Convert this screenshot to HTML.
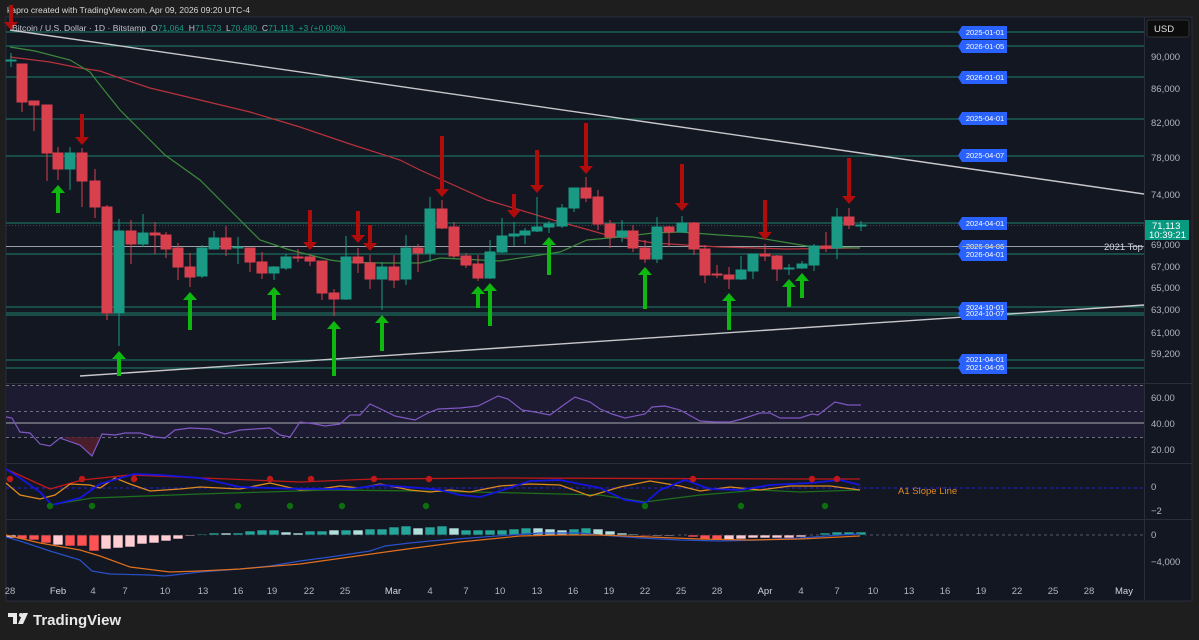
<!DOCTYPE html>
<html><head><meta charset="utf-8"><style>
html,body{margin:0;padding:0;background:#1e1e1e;width:1199px;height:640px;overflow:hidden}
svg{display:block}
text{font-family:"Liberation Sans",sans-serif}
</style></head><body>
<svg width="1199" height="640" viewBox="0 0 1199 640" xmlns="http://www.w3.org/2000/svg">
<rect width="1199" height="640" fill="#1e1e1e"/>
<text x="7" y="13" font-size="8.6" fill="#d8d8d8">kapro created with TradingView.com, Apr 09, 2026 09:20 UTC-4</text>
<rect x="6" y="17" width="1186" height="584" fill="#131722" stroke="#2a2e39"/>
<rect x="6" y="385" width="1138" height="52" fill="#1d1b31"/>
<g stroke="#2a2e39" stroke-width="1">
<line x1="6" y1="383.5" x2="1192" y2="383.5"/>
<line x1="6" y1="463.5" x2="1192" y2="463.5"/>
<line x1="6" y1="519.5" x2="1192" y2="519.5"/>
<line x1="1144.5" y1="17" x2="1144.5" y2="600"/>
</g>
<g stroke="#1d6b5c" stroke-width="1.3">
<line x1="6" y1="32" x2="1144" y2="32"/><line x1="6" y1="46" x2="1144" y2="46"/>
<line x1="6" y1="77" x2="1144" y2="77"/><line x1="6" y1="119" x2="1144" y2="119"/>
<line x1="6" y1="156" x2="1144" y2="156"/><line x1="6" y1="223" x2="1144" y2="223"/>
<line x1="6" y1="254" x2="1144" y2="254"/><line x1="6" y1="307" x2="1144" y2="307"/>
<line x1="6" y1="313" x2="1144" y2="313"/><line x1="6" y1="315" x2="1144" y2="315"/>
<line x1="6" y1="360" x2="1144" y2="360"/><line x1="6" y1="368" x2="1144" y2="368"/>
</g>
<line x1="6" y1="246.5" x2="1144" y2="246.5" stroke="#9aa0a8" stroke-width="1"/>
<line x1="6" y1="225.5" x2="1144" y2="225.5" stroke="#3a4a50" stroke-dasharray="1,2"/>
<line x1="10" y1="30" x2="1144" y2="194" stroke="#c8c8cc" stroke-width="1.4"/>
<line x1="80" y1="376" x2="1144" y2="305" stroke="#c8c8cc" stroke-width="1.4"/>
<polyline fill="none" stroke="#b8323c" stroke-width="1.2" points="10,57 50,62 80,68 100,71 120,78 150,88 200,100 250,112 300,127 350,144 400,160 420,170 487,200 553,220 607,235 653,243 720,247 787,249 860,248"/>
<polyline fill="none" stroke="#3c8a3c" stroke-width="1.2" points="10,47 35,51 70,60 90,72 100,85 120,110 140,130 165,155 200,180 230,210 260,240 290,250 310,255 330,260 345,262 380,263 400,263 420,263 440,258 500,261 560,252 587,240 620,237 653,233 680,232 720,235 753,237 813,247 860,248"/>
<g stroke-width="1">
<g fill="#d9404e" stroke="#d9404e">
<line x1="22" y1="64" x2="22" y2="112"/><rect x="17" y="64" width="10" height="38"/>
<line x1="34" y1="101" x2="34" y2="131"/><rect x="29" y="101" width="10" height="4"/>
<line x1="47" y1="105" x2="47" y2="181"/><rect x="42" y="105" width="10" height="48"/>
<line x1="58" y1="147" x2="58" y2="180"/><rect x="53" y="153" width="10" height="16"/>
<line x1="82" y1="148" x2="82" y2="207"/><rect x="77" y="153" width="10" height="28"/>
<line x1="95" y1="169" x2="95" y2="218"/><rect x="90" y="181" width="10" height="26"/>
<line x1="107" y1="205" x2="107" y2="320"/><rect x="102" y="207" width="10" height="106"/>
<line x1="131" y1="220" x2="131" y2="264"/><rect x="126" y="231" width="10" height="13"/>
<line x1="155" y1="222" x2="155" y2="254"/><rect x="150" y="233" width="10" height="2"/>
<line x1="166" y1="232" x2="166" y2="258"/><rect x="161" y="235" width="10" height="14"/>
<line x1="178" y1="243" x2="178" y2="280"/><rect x="173" y="248" width="10" height="19"/>
<line x1="190" y1="253" x2="190" y2="287"/><rect x="185" y="267" width="10" height="10"/>
<line x1="226" y1="226" x2="226" y2="256"/><rect x="221" y="238" width="10" height="11"/>
<line x1="250" y1="248" x2="250" y2="272"/><rect x="245" y="248" width="10" height="14"/>
<line x1="262" y1="252" x2="262" y2="279"/><rect x="257" y="262" width="10" height="11"/>
<line x1="298" y1="249" x2="298" y2="262"/><rect x="293" y="257" width="10" height="1"/>
<line x1="310" y1="254" x2="310" y2="266"/><rect x="305" y="257" width="10" height="4"/>
<line x1="322" y1="261" x2="322" y2="300"/><rect x="317" y="261" width="10" height="32"/>
<line x1="334" y1="289" x2="334" y2="316"/><rect x="329" y="293" width="10" height="6"/>
<line x1="358" y1="248" x2="358" y2="273"/><rect x="353" y="257" width="10" height="6"/>
<line x1="370" y1="255" x2="370" y2="289"/><rect x="365" y="263" width="10" height="16"/>
<line x1="394" y1="255" x2="394" y2="288"/><rect x="389" y="267" width="10" height="13"/>
<line x1="418" y1="244" x2="418" y2="272"/><rect x="413" y="248" width="10" height="5"/>
<line x1="442" y1="200" x2="442" y2="229"/><rect x="437" y="209" width="10" height="19"/>
<line x1="454" y1="222" x2="454" y2="258"/><rect x="449" y="227" width="10" height="29"/>
<line x1="466" y1="253" x2="466" y2="268"/><rect x="461" y="256" width="10" height="9"/>
<line x1="478" y1="255" x2="478" y2="281"/><rect x="473" y="264" width="10" height="14"/>
<line x1="586" y1="177" x2="586" y2="202"/><rect x="581" y="188" width="10" height="10"/>
<line x1="598" y1="190" x2="598" y2="230"/><rect x="593" y="197" width="10" height="27"/>
<line x1="610" y1="220" x2="610" y2="248"/><rect x="605" y="224" width="10" height="13"/>
<line x1="633" y1="225" x2="633" y2="252"/><rect x="628" y="231" width="10" height="17"/>
<line x1="645" y1="240" x2="645" y2="263"/><rect x="640" y="248" width="10" height="11"/>
<line x1="669" y1="226" x2="669" y2="247"/><rect x="664" y="227" width="10" height="5"/>
<line x1="694" y1="222" x2="694" y2="255"/><rect x="689" y="223" width="10" height="26"/>
<line x1="705" y1="245" x2="705" y2="283"/><rect x="700" y="249" width="10" height="26"/>
<line x1="717" y1="265" x2="717" y2="278"/><rect x="712" y="274" width="10" height="1"/>
<line x1="729" y1="267" x2="729" y2="289"/><rect x="724" y="275" width="10" height="4"/>
<line x1="765" y1="244" x2="765" y2="261"/><rect x="760" y="254" width="10" height="2"/>
<line x1="777" y1="255" x2="777" y2="281"/><rect x="772" y="256" width="10" height="13"/>
<line x1="826" y1="232" x2="826" y2="252"/><rect x="821" y="246" width="10" height="2"/>
<line x1="849" y1="208" x2="849" y2="229"/><rect x="844" y="217" width="10" height="8"/>
</g>
<g fill="#1a9a84" stroke="#1a9a84">
<line x1="11" y1="53" x2="11" y2="67"/><rect x="6" y="60" width="10" height="1"/>
<line x1="70" y1="147" x2="70" y2="190"/><rect x="65" y="153" width="10" height="16"/>
<line x1="119" y1="219" x2="119" y2="346"/><rect x="114" y="231" width="10" height="82"/>
<line x1="143" y1="214" x2="143" y2="247"/><rect x="138" y="233" width="10" height="11"/>
<line x1="202" y1="245" x2="202" y2="278"/><rect x="197" y="248" width="10" height="28"/>
<line x1="214" y1="231" x2="214" y2="249"/><rect x="209" y="238" width="10" height="11"/>
<line x1="238" y1="237" x2="238" y2="264"/><rect x="233" y="247" width="10" height="1"/>
<line x1="274" y1="266" x2="274" y2="280"/><rect x="269" y="267" width="10" height="6"/>
<line x1="286" y1="254" x2="286" y2="270"/><rect x="281" y="257" width="10" height="11"/>
<line x1="346" y1="236" x2="346" y2="300"/><rect x="341" y="257" width="10" height="42"/>
<line x1="382" y1="262" x2="382" y2="310"/><rect x="377" y="267" width="10" height="12"/>
<line x1="406" y1="235" x2="406" y2="285"/><rect x="401" y="248" width="10" height="31"/>
<line x1="430" y1="197" x2="430" y2="262"/><rect x="425" y="209" width="10" height="44"/>
<line x1="490" y1="240" x2="490" y2="279"/><rect x="485" y="252" width="10" height="26"/>
<line x1="502" y1="218" x2="502" y2="253"/><rect x="497" y="236" width="10" height="16"/>
<line x1="514" y1="222" x2="514" y2="246"/><rect x="509" y="234" width="10" height="2"/>
<line x1="525" y1="228" x2="525" y2="244"/><rect x="520" y="231" width="10" height="4"/>
<line x1="537" y1="197" x2="537" y2="232"/><rect x="532" y="227" width="10" height="4"/>
<line x1="549" y1="221" x2="549" y2="233"/><rect x="544" y="224" width="10" height="3"/>
<line x1="562" y1="204" x2="562" y2="228"/><rect x="557" y="208" width="10" height="18"/>
<line x1="574" y1="188" x2="574" y2="212"/><rect x="569" y="188" width="10" height="20"/>
<line x1="622" y1="220" x2="622" y2="242"/><rect x="617" y="231" width="10" height="6"/>
<line x1="657" y1="217" x2="657" y2="263"/><rect x="652" y="227" width="10" height="32"/>
<line x1="682" y1="216" x2="682" y2="233"/><rect x="677" y="223" width="10" height="9"/>
<line x1="741" y1="256" x2="741" y2="280"/><rect x="736" y="270" width="10" height="9"/>
<line x1="753" y1="254" x2="753" y2="279"/><rect x="748" y="254" width="10" height="17"/>
<line x1="789" y1="264" x2="789" y2="275"/><rect x="784" y="268" width="10" height="1"/>
<line x1="802" y1="261" x2="802" y2="269"/><rect x="797" y="264" width="10" height="4"/>
<line x1="814" y1="244" x2="814" y2="271"/><rect x="809" y="246" width="10" height="19"/>
<line x1="837" y1="208" x2="837" y2="259"/><rect x="832" y="217" width="10" height="31"/>
<line x1="861" y1="221" x2="861" y2="231"/><rect x="856" y="225" width="10" height="1"/>
</g>
</g>
<g fill="#b00c0c">
<path d="M9,5h4v17h5l-7,8l-7,-8h5z"/>
<path d="M80,114h4v23h5l-7,8l-7,-8h5z"/>
<path d="M308,210h4v32h5l-7,8l-7,-8h5z"/>
<path d="M356,211h4v24h5l-7,8l-7,-8h5z"/>
<path d="M368,225h4v18h5l-7,8l-7,-8h5z"/>
<path d="M440,136h4v53h5l-7,8l-7,-8h5z"/>
<path d="M512,194h4v16h5l-7,8l-7,-8h5z"/>
<path d="M535,150h4v35h5l-7,8l-7,-8h5z"/>
<path d="M584,123h4v43h5l-7,8l-7,-8h5z"/>
<path d="M680,164h4v39h5l-7,8l-7,-8h5z"/>
<path d="M763,200h4v32h5l-7,8l-7,-8h5z"/>
<path d="M847,158h4v38h5l-7,8l-7,-8h5z"/>
</g>
<g fill="#0fb80f">
<path d="M58,185l7,8h-5v20h-4v-20h-5z"/>
<path d="M119,351l7,8h-5v17h-4v-17h-5z"/>
<path d="M190,292l7,8h-5v30h-4v-30h-5z"/>
<path d="M274,287l7,8h-5v25h-4v-25h-5z"/>
<path d="M334,321l7,8h-5v47h-4v-47h-5z"/>
<path d="M382,315l7,8h-5v28h-4v-28h-5z"/>
<path d="M478,286l7,8h-5v14h-4v-14h-5z"/>
<path d="M490,283l7,8h-5v35h-4v-35h-5z"/>
<path d="M549,237l7,8h-5v30h-4v-30h-5z"/>
<path d="M645,267l7,8h-5v34h-4v-34h-5z"/>
<path d="M729,293l7,8h-5v29h-4v-29h-5z"/>
<path d="M789,279l7,8h-5v20h-4v-20h-5z"/>
<path d="M802,273l7,8h-5v17h-4v-17h-5z"/>
</g>
<text x="12" y="31" font-size="8.6" fill="#c0c3ca" xml:space="preserve">Bitcoin / U.S. Dollar · 1D · Bitstamp  O<tspan fill="#1a9a84">71,064</tspan>  H<tspan fill="#1a9a84">71,573</tspan>  L<tspan fill="#1a9a84">70,480</tspan>  C<tspan fill="#1a9a84">71,113  +3 (+0.00%)</tspan></text>
<g font-size="7.5" fill="#fff" text-anchor="middle">
<g fill="#2962ff">
<path d="M962,26h45v13h-45l-4,-6.5z"/><path d="M962,40h45v13h-45l-4,-6.5z"/>
<path d="M962,71h45v13h-45l-4,-6.5z"/><path d="M962,112h45v13h-45l-4,-6.5z"/>
<path d="M962,149h45v13h-45l-4,-6.5z"/><path d="M962,217h45v13h-45l-4,-6.5z"/>
<path d="M962,240h45v13h-45l-4,-6.5z"/><path d="M962,248h45v13h-45l-4,-6.5z"/>
<path d="M962,302h45v13h-45l-4,-6.5z"/><path d="M962,307h45v13h-45l-4,-6.5z"/>
<path d="M962,354h45v13h-45l-4,-6.5z"/><path d="M962,361h45v13h-45l-4,-6.5z"/>
</g>
<text x="985" y="35">2025-01-01</text><text x="985" y="49">2026-01-05</text>
<text x="985" y="80">2026-01-01</text><text x="985" y="121">2025-04-01</text>
<text x="985" y="158">2025-04-07</text><text x="985" y="226">2024-04-01</text>
<text x="985" y="257">2026-04-01</text><text x="985" y="249">2026-04-06</text>
<text x="985" y="310">2024-10-01</text><text x="985" y="316">2024-10-07</text>
<text x="985" y="362">2021-04-01</text><text x="985" y="370">2021-04-05</text>
</g>
<line x1="962" y1="246.5" x2="1007" y2="246.5" stroke="#9aa0a8"/>
<text x="1104" y="250" font-size="9.5" fill="#d1d4dc">2021 Top</text>
<rect x="1147" y="20" width="42" height="17" rx="2" fill="#0c0c0c" stroke="#333"/>
<text x="1154" y="32" font-size="9.5" fill="#e0e0e0">USD</text>
<g font-size="9.5" fill="#b2b5be">
<text x="1151" y="60">90,000</text><text x="1151" y="92">86,000</text>
<text x="1151" y="126">82,000</text><text x="1151" y="161">78,000</text>
<text x="1151" y="198">74,000</text><text x="1151" y="248">69,000</text>
<text x="1151" y="270">67,000</text><text x="1151" y="291">65,000</text>
<text x="1151" y="313">63,000</text><text x="1151" y="336">61,000</text>
<text x="1151" y="357">59,200</text>
<text x="1151" y="401">60.00</text><text x="1151" y="427">40.00</text><text x="1151" y="453">20.00</text>
<text x="1151" y="490">0</text><text x="1151" y="514">−2</text>
<text x="1151" y="538">0</text><text x="1151" y="565">−4,000</text>
</g>
<rect x="1145" y="220" width="44" height="20" fill="#089981"/>
<text x="1152" y="229" font-size="9.5" fill="#fff">71,113</text>
<text x="1149" y="238" font-size="9.5" fill="#fff">10:39:21</text>
<g stroke="#6f6f80" stroke-dasharray="3,3" stroke-width="1"><line x1="6" y1="385.5" x2="1144" y2="385.5"/><line x1="6" y1="411.5" x2="1144" y2="411.5"/><line x1="6" y1="437.5" x2="1144" y2="437.5"/></g>
<line x1="6" y1="423" x2="1144" y2="423" stroke="#8c8c98" stroke-width="1.2"/>
<path d="M62,437 L80,445 L92,456 L100,437z" fill="#5a2030" opacity="0.8"/>
<polyline fill="none" stroke="#7e57c2" stroke-width="1.2" points="6,417 12,418 20,432 30,433 40,444 50,446 60,438 80,445 92,456 102,434 115,435 125,433 140,433 155,437 165,438 175,430 190,428 210,429 225,434 240,430 255,429 270,428 280,435 290,437 300,422 315,424 325,426 340,424 350,415 360,415 370,404 385,411 395,416 415,420 428,413 438,409 460,408 478,406 498,396 508,399 522,410 535,412 550,415 565,404 575,397 590,402 600,409 612,414 625,418 645,414 652,407 665,406 680,410 700,421 715,422 730,422 742,419 760,413 770,413 780,418 800,418 812,414 818,415 835,402 848,405 861,405"/>
<line x1="6" y1="488" x2="1144" y2="488" stroke="#2222a8" stroke-width="1.3" stroke-dasharray="3,3"/>
<text x="898" y="494" font-size="9.5" fill="#e08a1e">A1 Slope Line</text>
<polyline fill="none" stroke="#c01818" stroke-width="1.3" points="6,469 50,489 82,480 130,475 300,482 374,479 500,478 800,479 860,479"/>
<polyline fill="none" stroke="#1e6e1e" stroke-width="1.3" points="50,505 92,498 200,494 330,490 420,491 520,493 600,495 645,502 700,495 760,490 800,492 860,490"/>
<polyline fill="none" stroke="#e08a1e" stroke-width="1.3" points="6,483 20,495 40,499 55,495 70,484 90,485 100,488 115,478 130,484 150,491 180,489 200,487 240,489 270,483 300,490 320,489 340,486 360,488 380,484 410,490 430,492 450,490 470,492 500,486 530,484 560,485 590,496 620,487 650,481 680,486 700,491 730,487 760,490 790,486 830,486 860,490"/>
<polyline fill="none" stroke="#1515e0" stroke-width="1.8" points="6,469 20,478 40,492 52,505 80,498 100,484 134,474 160,475 200,478 240,487 300,489 350,489 380,485 420,488 440,490 460,495 480,497 500,491 530,481 560,480 600,488 625,500 645,503 660,490 685,480 710,489 740,490 770,485 810,483 840,480 860,485"/>
<g fill="#c01818"><circle cx="10" cy="479" r="3.2"/><circle cx="82" cy="479" r="3.2"/><circle cx="134" cy="479" r="3.2"/><circle cx="270" cy="479" r="3.2"/><circle cx="311" cy="479" r="3.2"/><circle cx="374" cy="479" r="3.2"/><circle cx="429" cy="479" r="3.2"/><circle cx="693" cy="479" r="3.2"/><circle cx="812" cy="479" r="3.2"/><circle cx="837" cy="479" r="3.2"/></g>
<g fill="#0e6e0e"><circle cx="50" cy="506" r="3.2"/><circle cx="92" cy="506" r="3.2"/><circle cx="238" cy="506" r="3.2"/><circle cx="290" cy="506" r="3.2"/><circle cx="342" cy="506" r="3.2"/><circle cx="426" cy="506" r="3.2"/><circle cx="645" cy="506" r="3.2"/><circle cx="741" cy="506" r="3.2"/><circle cx="825" cy="506" r="3.2"/></g>
<line x1="6" y1="535" x2="1144" y2="535" stroke="#555a66" stroke-dasharray="3,3"/>
<g stroke="#131722" stroke-width="0.6">
<g fill="#ff5252">
<rect x="17" y="535" width="10" height="4"/><rect x="29" y="535" width="10" height="5"/><rect x="41" y="535" width="10" height="8"/><rect x="65" y="535" width="10" height="11"/><rect x="77" y="535" width="10" height="11"/><rect x="89" y="535" width="10" height="16"/>
<rect x="640" y="535" width="10" height="1"/><rect x="688" y="535" width="10" height="2"/><rect x="700" y="535" width="10" height="4"/><rect x="712" y="535" width="10" height="5"/>
</g>
<g fill="#ffcdd2">
<rect x="6" y="535" width="10" height="3"/><rect x="53" y="535" width="10" height="10"/><rect x="101" y="535" width="10" height="14"/><rect x="113" y="535" width="10" height="13"/><rect x="125" y="535" width="10" height="12"/><rect x="137" y="535" width="10" height="9"/><rect x="149" y="535" width="10" height="8"/><rect x="161" y="535" width="10" height="6"/><rect x="173" y="535" width="10" height="4"/><rect x="185" y="535" width="10" height="1"/>
<rect x="652" y="535" width="10" height="1"/><rect x="664" y="535" width="10" height="1"/><rect x="724" y="535" width="10" height="5"/><rect x="736" y="535" width="10" height="4"/><rect x="748" y="535" width="10" height="3"/><rect x="760" y="535" width="10" height="3"/><rect x="772" y="535" width="10" height="3"/><rect x="784" y="535" width="10" height="3"/><rect x="796" y="535" width="10" height="2"/>
</g>
<g fill="#26a69a">
<rect x="197" y="534" width="10" height="1"/><rect x="209" y="533" width="10" height="2"/><rect x="233" y="533" width="10" height="2"/><rect x="245" y="531" width="10" height="4"/><rect x="257" y="530" width="10" height="5"/><rect x="269" y="530" width="10" height="5"/><rect x="305" y="531" width="10" height="4"/><rect x="317" y="531" width="10" height="4"/><rect x="341" y="530" width="10" height="5"/><rect x="365" y="529" width="10" height="6"/><rect x="377" y="529" width="10" height="6"/><rect x="389" y="527" width="10" height="8"/><rect x="401" y="526" width="10" height="9"/><rect x="425" y="527" width="10" height="8"/><rect x="437" y="526" width="10" height="9"/><rect x="461" y="530" width="10" height="5"/><rect x="473" y="530" width="10" height="5"/><rect x="485" y="530" width="10" height="5"/><rect x="497" y="530" width="10" height="5"/><rect x="509" y="529" width="10" height="6"/><rect x="521" y="528" width="10" height="7"/><rect x="569" y="529" width="10" height="6"/><rect x="581" y="528" width="10" height="7"/>
<rect x="820" y="533" width="10" height="2"/><rect x="832" y="532" width="10" height="3"/><rect x="844" y="532" width="10" height="3"/><rect x="856" y="532" width="10" height="3"/>
</g>
<g fill="#b2dfdb">
<rect x="221" y="533" width="10" height="2"/><rect x="281" y="532" width="10" height="3"/><rect x="293" y="533" width="10" height="2"/><rect x="329" y="530" width="10" height="5"/><rect x="353" y="530" width="10" height="5"/><rect x="413" y="528" width="10" height="7"/><rect x="449" y="528" width="10" height="7"/><rect x="533" y="528" width="10" height="7"/><rect x="545" y="529" width="10" height="6"/><rect x="557" y="530" width="10" height="5"/><rect x="593" y="529" width="10" height="6"/><rect x="605" y="531" width="10" height="4"/><rect x="617" y="533" width="10" height="2"/><rect x="628" y="534" width="10" height="1"/>
</g>
</g>
<polyline fill="none" stroke="#2a50c8" stroke-width="1.2" points="6,537 20,541 50,551 80,560 92,571 110,574 150,575 165,576 200,572 240,569 270,566 300,561 330,557 370,551 385,546 410,543 430,541 470,538 510,535 540,533 580,533 600,535 640,538 680,540 720,541 760,540 800,538 840,535 860,534"/>
<polyline fill="none" stroke="#e0701e" stroke-width="1.2" points="6,535 40,543 80,550 100,556 130,567 170,572 200,571 240,569 300,564 350,557 400,550 460,542 520,536 560,535 600,535 650,537 700,539 750,540 800,539 860,536"/>
<g font-size="9.5" fill="#b2b5be" text-anchor="middle">
<text x="10" y="594">28</text><text x="58" y="594" fill="#d1d4dc">Feb</text><text x="93" y="594">4</text><text x="125" y="594">7</text><text x="165" y="594">10</text><text x="203" y="594">13</text><text x="238" y="594">16</text><text x="272" y="594">19</text><text x="309" y="594">22</text><text x="345" y="594">25</text><text x="393" y="594" fill="#d1d4dc">Mar</text><text x="430" y="594">4</text><text x="466" y="594">7</text><text x="500" y="594">10</text><text x="537" y="594">13</text><text x="573" y="594">16</text><text x="609" y="594">19</text><text x="645" y="594">22</text><text x="681" y="594">25</text><text x="717" y="594">28</text><text x="765" y="594" fill="#d1d4dc">Apr</text><text x="801" y="594">4</text><text x="837" y="594">7</text><text x="873" y="594">10</text><text x="909" y="594">13</text><text x="945" y="594">16</text><text x="981" y="594">19</text><text x="1017" y="594">22</text><text x="1053" y="594">25</text><text x="1089" y="594">28</text><text x="1124" y="594" fill="#d1d4dc">May</text>
</g>
<g fill="#e8e8e8">
<path d="M8,613h9v11h-4v-7h-5z"/><circle cx="21" cy="615" r="2"/><path d="M23,613h5l-5,11h-5z"/>
</g>
<text x="33" y="625" font-size="15" font-weight="bold" fill="#e8e8e8">TradingView</text>
</svg>
</body></html>
